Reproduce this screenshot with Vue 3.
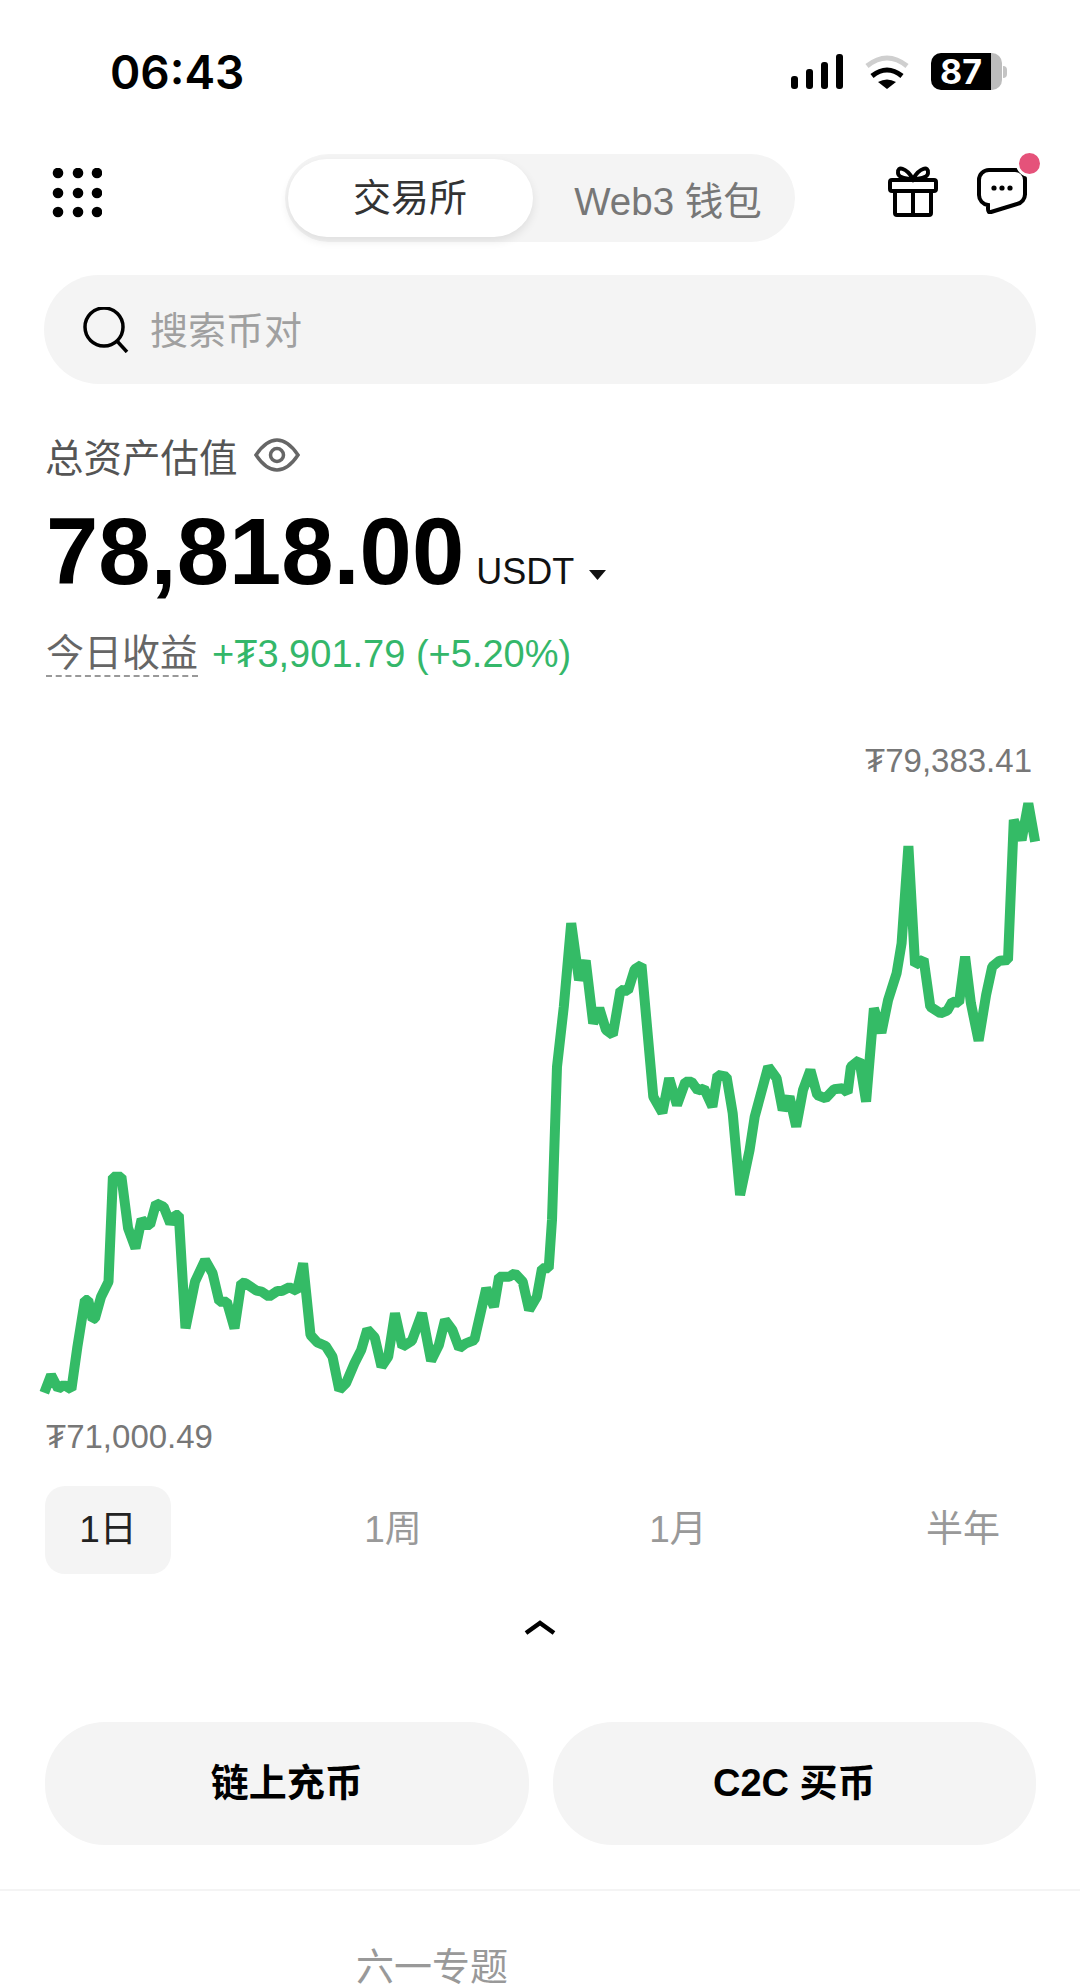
<script setup>
import { ref, computed } from 'vue'

const tabs = ['1日', '1周', '1月', '半年']
const activeTab = ref('1日')
const dots = [5, 25, 44].flatMap((y) => [6, 26, 45].map((x) => ({ x, y })))
const signalBars = [13, 20, 27, 35]

// traced from the reference, left half and right half of the curve
const leftHalf = [
  [72,878],[92,825],[113,866],[130,855],[152,868],[170,740],[192,600],[202,600],[215,658],[222,655],
  [240,590],[262,545],[275,230],[300,230],[320,385],[342,445],[360,358],[375,375],[385,375],[403,310],
  [425,320],[445,370],[460,345],[470,345],[490,685],[518,545],[548,480],[570,520],[590,605],[612,605],
  [635,685],[655,548],[668,550],[700,572],[715,575],[737,590],[762,573],[775,573],[797,562],[820,573],
  [838,490],[860,705],[880,727],[905,738],[925,770],[945,870],[965,850],[990,790],[1010,750],[1028,688],
  [1050,712],[1070,800],[1090,770],[1110,640],[1132,740],[1160,722],[1190,640],[1217,782],[1240,735],[1258,660],
  [1280,690],[1300,745],[1320,730],[1345,720],[1380,565],[1403,620],[1418,530],[1448,530],[1465,520],[1488,545],
  [1507,630],[1530,590],[1545,505],[1565,505],
]
const rightHalf = [
  [65,1500],[80,1040],[100,860],[122,610],[145,780],[165,722],[187,910],[205,865],[225,930],[245,945],
  [268,810],[290,812],[310,748],[330,735],[365,1130],[392,1178],[412,1075],[435,1155],[460,1085],[478,1085],
  [497,1112],[515,1105],[540,1160],[555,1065],[582,1070],[600,1180],[622,1425],[650,1290],[665,1190],[705,1040],
  [730,1075],[748,1170],[768,1130],[788,1220],[808,1110],[830,1050],[850,1125],[875,1135],[900,1108],[925,1105],
  [940,1118],[950,1040],[975,1020],[995,1145],[1018,865],[1040,938],[1060,840],[1085,760],[1100,670],[1120,378],
  [1140,735],[1165,718],[1185,860],[1215,880],[1235,872],[1250,845],[1270,848],[1288,710],[1305,850],[1328,962],
  [1350,825],[1368,740],[1390,722],[1415,720],[1432,300],[1455,360],[1475,250],[1495,365],
]

const linePoints = computed(() => {
  const a = leftHalf.map(([x, y]) => [20 + x / 2.96, 1100 + y / 3])
  const b = rightHalf.map(([x, y]) => [530 + x / 2.96, 720 + y / 3])
  return [...a, ...b].map(([x, y]) => `${x.toFixed(1)},${y.toFixed(1)}`).join(' ')
})
</script>

<template>
  <div class="page" lang="zh-CN">
    <div class="status">
      <span class="time">06:43</span>
      <div class="status-icons">
        <div class="signal">
          <i v-for="h in signalBars" :key="h" :style="{ height: h + 'px' }"></i>
        </div>
        <svg class="wifi" width="46" height="34" viewBox="0 0 46 34">
          <path d="M3 11Q23 -5 43 11" fill="none" stroke="#cfcfcf" stroke-width="5" />
          <path d="M8 21Q23 9 38 21" fill="none" stroke="#000" stroke-width="5" />
          <path d="M14 27Q23 22 32 27L23 34Z" fill="#000" />
        </svg>
        <div class="battery">
          <div class="battery-fill">87</div>
          <div class="battery-rest"></div>
        </div>
        <i class="battery-tip"></i>
      </div>
    </div>

    <div class="header">
      <svg class="grid-icon" width="50" height="50" viewBox="0 0 50 50">
        <circle v-for="(d, i) in dots" :key="i" :cx="d.x" :cy="d.y" r="5.3" fill="#000" />
      </svg>
      <div class="switch">
        <div class="switch-on">交易所</div>
        <div class="switch-off">Web3 钱包</div>
      </div>
      <div class="header-right">
        <svg width="50" height="52" viewBox="0 0 50 52" fill="none" stroke="#000" stroke-width="4">
          <path d="M25 14C18 2 9 1 10 8C10 13 20 14 25 14C30 14 40 13 40 8C41 1 32 2 25 14Z" />
          <rect x="2" y="15" width="46" height="11" rx="2" />
          <path d="M7 26V48a2 2 0 0 0 2 2H41a2 2 0 0 0 2-2V26M25 26V50" />
        </svg>
        <div class="chat">
          <svg width="50" height="46" viewBox="0 0 50 46" fill="none">
            <path d="M12 2H38a10 10 0 0 1 10 10V26a10 10 0 0 1-8 10L14 44Q11 45 11 41V37A10 10 0 0 1 2 27V12A10 10 0 0 1 12 2Z" stroke="#000" stroke-width="4" />
            <circle cx="17" cy="20" r="2.6" fill="#000" />
            <circle cx="25" cy="20" r="2.6" fill="#000" />
            <circle cx="33" cy="20" r="2.6" fill="#000" />
          </svg>
          <i class="chat-dot"></i>
        </div>
      </div>
    </div>

    <div class="search">
      <svg width="46" height="46" viewBox="0 0 46 46" fill="none" stroke="#000" stroke-width="3.5">
        <circle cx="21" cy="20" r="19" />
        <path d="M34 34L44 45" />
      </svg>
      <span>搜索币对</span>
    </div>

    <div class="total-label">
      <span>总资产估值</span>
      <svg width="46" height="34" viewBox="0 0 46 34" fill="none" stroke="#666" stroke-width="3.5">
        <path d="M2 17C10 5 17 2 23 2C29 2 36 5 44 17C36 29 29 32 23 32C17 32 10 29 2 17Z" />
        <circle cx="23" cy="17" r="6.5" />
      </svg>
    </div>

    <div class="total-value">
      <span class="amount">78,818.00</span>
      <span class="unit">USDT</span>
      <svg class="caret" width="17" height="10" viewBox="0 0 17 10"><path d="M0 0H17L8.5 10Z" fill="#111" /></svg>
    </div>

    <div class="today">
      <span class="today-label">今日收益</span>
      <span class="today-value">+₮3,901.79 (+5.20%)</span>
    </div>

    <div class="high">₮79,383.41</div>
    <svg class="chart" width="1080" height="620" viewBox="0 790 1080 620">
      <polyline :points="linePoints" fill="none" stroke="#34bb66" stroke-width="10" stroke-linejoin="bevel" />
    </svg>
    <div class="low">₮71,000.49</div>

    <div class="tabs">
      <div
        v-for="t in tabs"
        :key="t"
        class="tab"
        :class="{ active: t === activeTab }"
        @click="activeTab = t"
      >{{ t }}</div>
    </div>

    <div class="collapse">
      <svg width="32" height="15" viewBox="0 0 32 15" fill="none" stroke="#000" stroke-width="4.5">
        <path d="M2 13L16 3L30 13" />
      </svg>
    </div>

    <div class="actions">
      <div class="action">链上充币</div>
      <div class="action">C2C 买币</div>
    </div>

    <div class="bottom-tabs">
      <span>六一专题</span>
    </div>
  </div>
</template>

<style scoped>
.page {
  width: 1080px;
  height: 1986px;
  overflow: hidden;
  background: #fff;
  font-family: "Liberation Sans", "Noto Sans CJK SC", sans-serif;
}

.status {
  display: flex;
  justify-content: space-between;
  align-items: center;
  height: 37px;
  margin-top: 53px;
  padding: 0 73px 0 110px;
}
.time {
  font-family: Inter, sans-serif;
  font-size: 46px;
  font-weight: 600;
  color: #000;
}
.status-icons {
  display: flex;
  align-items: center;
}
.signal {
  display: flex;
  align-items: flex-end;
  gap: 8px;
  height: 35px;
  margin-right: 21px;
}
.signal i {
  display: block;
  width: 7px;
  border-radius: 3px;
  background: #000;
}
.wifi {
  margin-right: 21px;
}
.battery {
  display: flex;
  width: 71px;
  height: 37px;
}
.battery-fill {
  flex: 1;
  border-radius: 10px 0 0 10px;
  background: #000;
  color: #fff;
  font-family: Inter, sans-serif;
  font-size: 34px;
  font-weight: 700;
  line-height: 37px;
  text-align: center;
}
.battery-rest {
  width: 11px;
  border-radius: 0 10px 10px 0;
  background: #bdbdbd;
}
.battery-tip {
  display: block;
  width: 4px;
  height: 12px;
  margin-left: 1px;
  border-radius: 0 4px 4px 0;
  background: #c4c4c4;
}

.header {
  display: grid;
  grid-template-columns: 1fr auto 1fr;
  align-items: center;
  height: 88px;
  margin-top: 64px;
  padding: 0 53px 0 52px;
}
.grid-icon {
  margin-bottom: 10px;
}
.switch {
  display: flex;
  align-items: center;
  width: 510px;
  height: 88px;
  padding: 0 3px;
  border-radius: 44px;
  background: #f4f4f4;
  box-sizing: border-box;
}
.switch-on {
  width: 245px;
  height: 78px;
  border-radius: 39px;
  background: #fff;
  box-shadow: 0 4px 10px rgba(0, 0, 0, 0.09);
  color: #333;
  font-size: 38px;
  line-height: 78px;
  text-align: center;
}
.switch-off {
  flex: 1;
  padding-left: 12px;
  color: #777;
  font-size: 38.5px;
  text-align: center;
}
.header-right {
  display: flex;
  justify-content: flex-end;
  align-items: center;
  gap: 39px;
  margin-bottom: 14px;
}
.chat {
  position: relative;
  display: flex;
}
.chat-dot {
  position: absolute;
  top: -18px;
  right: -16px;
  width: 21px;
  height: 21px;
  border: 3px solid #fff;
  border-radius: 50%;
  background: #e5527a;
}

.search {
  display: flex;
  align-items: center;
  gap: 21px;
  height: 109px;
  margin: 33px 44px 0;
  padding-left: 39px;
  border-radius: 55px;
  background: #f4f4f4;
  color: #a0a0a0;
  font-size: 38px;
}
.search span {
  margin-bottom: 5px;
}

.total-label {
  display: flex;
  align-items: center;
  gap: 16px;
  height: 38px;
  margin: 52px 0 0 45px;
  color: #555;
  font-size: 38.5px;
}

.total-value {
  display: flex;
  align-items: baseline;
  height: 100px;
  margin: 28px 0 0 46px;
  line-height: 100px;
}
.amount {
  color: #000;
  font-size: 94px;
  font-weight: 700;
}
.unit {
  margin-left: 12px;
  color: #111;
  font-size: 36px;
}
.caret {
  margin-left: 15px;
  align-self: center;
  transform: translateY(23px);
}

.today {
  display: flex;
  align-items: center;
  height: 44px;
  margin: 30px 0 0 46px;
}
.today-label {
  padding-bottom: 1px;
  border-bottom: 2px dashed #999;
  color: #666;
  font-size: 38px;
  line-height: 42px;
}
.today-value {
  margin-left: 14px;
  color: #34b76a;
  font-size: 38px;
}

.high {
  height: 40px;
  margin-top: 65px;
  padding-right: 48px;
  color: #777;
  font-size: 33px;
  line-height: 40px;
  text-align: right;
}
.chart {
  display: block;
  margin-top: 9px;
}
.low {
  height: 40px;
  margin: 7px 0 0 46px;
  color: #777;
  font-size: 33px;
  line-height: 40px;
}

.tabs {
  display: flex;
  justify-content: space-between;
  margin-top: 29px;
  padding: 0 54px 0 45px;
}
.tab {
  width: 126px;
  height: 88px;
  border-radius: 20px;
  color: #999;
  font-size: 37px;
  line-height: 88px;
  text-align: center;
}
.tab.active {
  background: #f4f4f4;
  color: #222;
}

.collapse {
  display: flex;
  justify-content: center;
  margin-top: 46px;
}

.actions {
  display: flex;
  gap: 24px;
  margin: 87px 44px 0 45px;
}
.action {
  flex: 1;
  height: 123px;
  border-radius: 60px;
  background: #f4f4f4;
  color: #000;
  font-size: 38px;
  font-weight: 700;
  line-height: 123px;
  text-align: center;
}

.bottom-tabs {
  margin-top: 44px;
  padding: 58px 0 0 356px;
  border-top: 2px solid #f4f4f4;
  color: #999;
  font-size: 38px;
  line-height: 36px;
}
</style>
